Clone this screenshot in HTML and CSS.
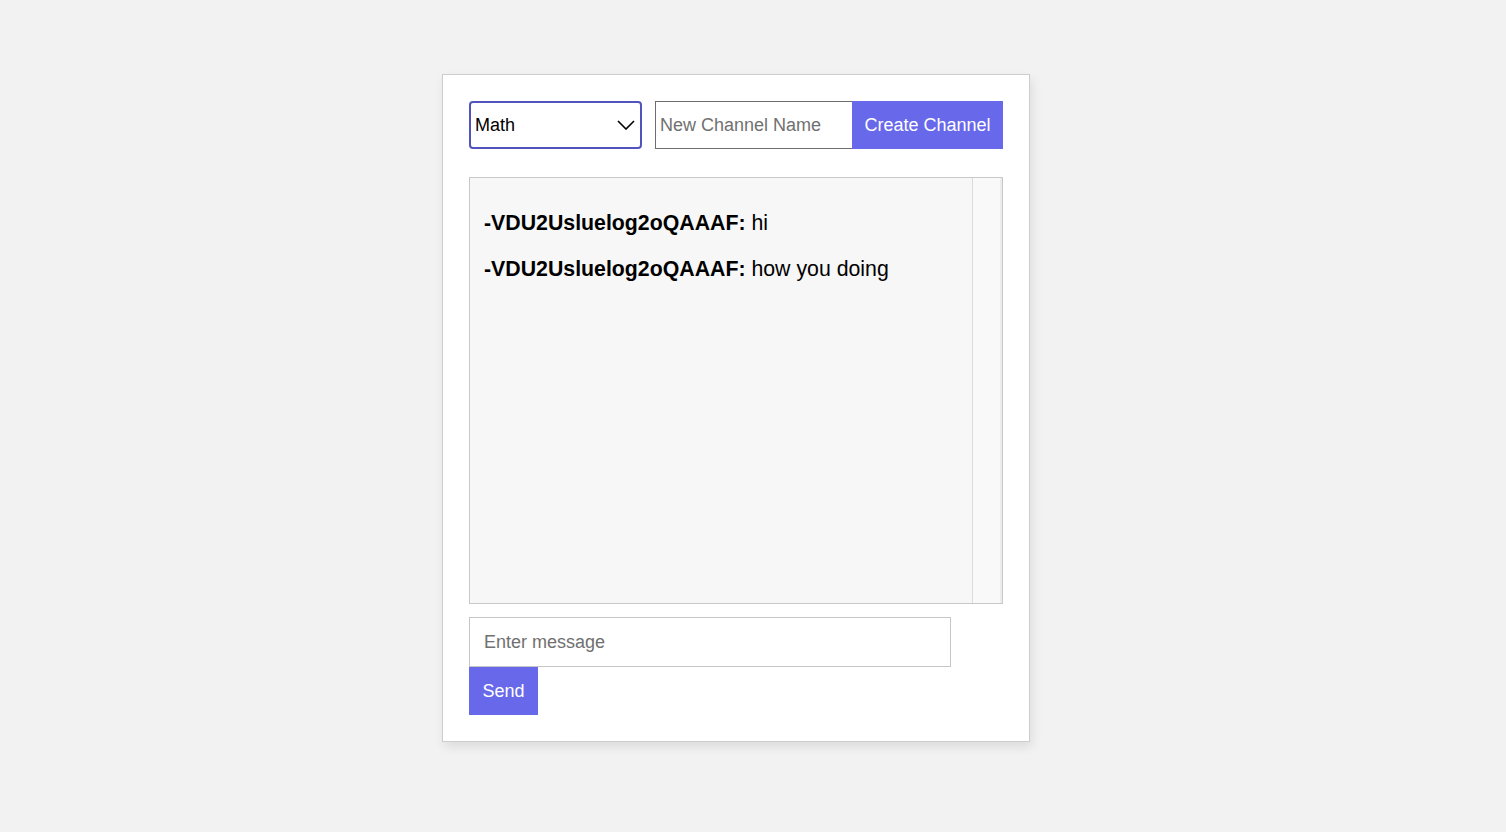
FILE: index.html
```html
<!DOCTYPE html>
<html lang="en">
<head>
<meta charset="utf-8">
<title>Chat</title>
<link rel="stylesheet" href="styles.css">
</head>
<body>
<div class="card">
  <div class="top-row">
    <div class="select-wrap">
      <select class="channel-select">
        <option>Math</option>
      </select>
      <svg class="chevron" width="18" height="10" viewBox="0 0 18 10" aria-hidden="true">
        <polyline points="1,1 9,9 17,1" fill="none" stroke="#000" stroke-width="1.6"/>
      </svg>
    </div>
    <input class="channel-input" type="text" placeholder="New Channel Name">
    <button class="btn create-btn">Create Channel</button>
  </div>
  <div class="chat-box">
    <div class="messages">
      <p class="msg"><b>-VDU2Usluelog2oQAAAF:</b> hi</p>
      <p class="msg"><b>-VDU2Usluelog2oQAAAF:</b> how you doing</p>
    </div>
    <div class="scroll-track"></div>
  </div>
  <input class="message-input" type="text" placeholder="Enter message">
  <button class="btn send-btn">Send</button>
</div>
</body>
</html>
```

FILE: styles.css
```css
* { box-sizing: border-box; }

html, body {
  margin: 0;
  height: 100%;
}

body {
  background: #f2f2f2;
  font-family: "Liberation Sans", Arial, sans-serif;
  display: flex;
  justify-content: center;
  align-items: flex-start;
  padding: 74px 34px 0 0;
}

.card {
  width: 588px;
  background: #fff;
  border: 1px solid #cdcdcd;
  padding: 26px;
  box-shadow: 2px 5px 10px rgba(0, 0, 0, 0.09);
  display: flex;
  flex-direction: column;
  align-items: flex-start;
}

.top-row {
  display: flex;
  gap: 13px;
  height: 48px;
  margin-bottom: 28px;
  width: 100%;
}

.select-wrap {
  position: relative;
  width: 173px;
  height: 48px;
}

.channel-select {
  appearance: none;
  -webkit-appearance: none;
  width: 100%;
  height: 100%;
  border: 2px solid #5353bd;
  border-radius: 4px;
  background: #fff;
  font-family: inherit;
  font-size: 18px;
  color: #000;
  padding: 0 0 0 4px;
  outline: none;
}

.chevron {
  position: absolute;
  right: 7px;
  top: 19px;
  pointer-events: none;
}

.channel-input {
  width: 197px;
  height: 48px;
  border: 1px solid #6e6e6e;
  border-right: none;
  font-family: inherit;
  font-size: 18px;
  padding: 0 4px;
  margin: 0;
  outline: none;
}

.top-row .create-btn {
  margin-left: -13px;
}

.channel-input::placeholder,
.message-input::placeholder {
  color: #707070;
}

.btn {
  background: #6868ea;
  color: #fff;
  border: none;
  font-family: inherit;
  font-size: 18px;
  padding: 0 12px;
  margin: 0;
  height: 48px;
  white-space: nowrap;
  cursor: pointer;
}

.create-btn {
  width: 151px;
}

.chat-box {
  width: 534px;
  height: 427px;
  background: #f7f7f7;
  border: 1px solid #c8c8c8;
  display: flex;
  margin-bottom: 13px;
}

.messages {
  flex: 1;
  padding: 12px 14px;
}

.msg {
  margin: 21px 0;
  font-size: 21.3px;
  line-height: 25px;
  color: #000;
}

.msg b {
  font-weight: bold;
}

.scroll-track {
  width: 30px;
  background: #f9f9f9;
  border-left: 1px solid #dcdcdc;
  border-right: 2px solid #ececec;
}

.message-input {
  width: 482px;
  height: 50px;
  border: 1px solid #c6c6c6;
  font-family: inherit;
  font-size: 18px;
  padding: 0 14px;
  margin: 0;
  outline: none;
}

.send-btn {
  width: 69px;
  padding: 0;
}
```
